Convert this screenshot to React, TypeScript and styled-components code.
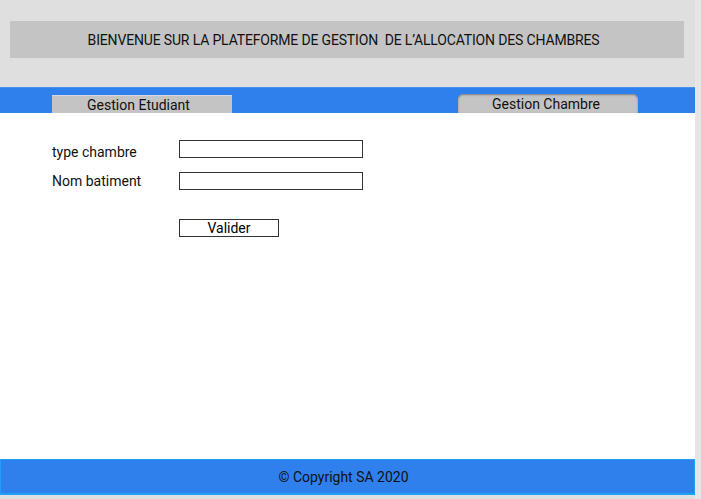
import { FC } from "react";
import styled, { createGlobalStyle } from "styled-components";

const GlobalStyle = createGlobalStyle`
  body {
    margin: 0;
    background: #dfdfdf;
    font-family: Roboto, "Liberation Sans", sans-serif;
    color: #111;
  }
`;

const Page = styled.div`
  width: 695px;
  border-right: 6px solid #e6e6e6;
  min-height: 499px;
`;

const Top = styled.div`
  padding: 21px 11px 29px 10px;
`;

const Banner = styled.div`
  height: 37px;
  background: #c4c4c4;
  display: flex;
  align-items: center;
  justify-content: center;
  padding-right: 7px;
  font-size: 14px;
  letter-spacing: -0.16px;
  white-space: pre;
`;

const Nav = styled.div`
  height: 26px;
  box-sizing: border-box;
  background: #2f80ed;
  border-top: 1px solid #4a90f0;
  display: flex;
  align-items: flex-end;
  padding-left: 52px;
`;

const Tab = styled.div<{ $rounded?: boolean; $offset?: number }>`
  width: 180px;
  height: ${(p) => (p.$rounded ? 19 : 18)}px;
  margin-left: ${(p) => p.$offset ?? 0}px;
  box-sizing: border-box;
  padding: 1px ${(p) => (p.$rounded ? 4 : 7)}px 0 0;
  background: #c4c4c4;
  font-size: 14px;
  display: flex;
  align-items: center;
  justify-content: center;
  border-radius: ${(p) => (p.$rounded ? "5px 5px 0 0" : "0")};
  box-shadow: ${(p) =>
    p.$rounded ? "inset 0 1px 2px rgba(0,0,0,0.35)" : "inset 0 1px 0 #d8d8d8"};
`;

const Content = styled.div`
  background: #fff;
  height: 346px;
  box-sizing: border-box;
  padding: 27px 0 0 52px;
`;

const Row = styled.div`
  display: flex;
  align-items: center;
  height: 18px;
  margin-bottom: 14px;
`;

const Label = styled.label<{ $shift?: number }>`
  width: 127px;
  font-size: 14px;
  position: relative;
  top: ${(p) => p.$shift ?? 0}px;
`;

const Input = styled.input`
  width: 184px;
  height: 18px;
  box-sizing: border-box;
  border: 1px solid #333;
  padding: 0;
  margin: 0;
`;

const Button = styled.button`
  margin: 29px 0 0 127px;
  width: 100px;
  height: 18px;
  box-sizing: border-box;
  border: 1px solid #333;
  background: #fff;
  font-family: Roboto, "Liberation Sans", sans-serif;
  font-size: 14px;
  padding: 0;
  line-height: 16px;
  display: block;
`;

const Footer = styled.div`
  height: 36px;
  box-sizing: border-box;
  background: #2f80ed;
  border: 1px solid #1fa0f7;
  border-width: 1px 1px 2px 1px;
  display: flex;
  align-items: center;
  justify-content: center;
  padding-right: 8px;
  font-size: 14px;
`;

const App: FC = () => {
  return (
    <>
      <GlobalStyle />
      <Page>
        <Top>
          <Banner>
            BIENVENUE SUR LA PLATEFORME DE GESTION  DE L’ALLOCATION DES CHAMBRES
          </Banner>
        </Top>
        <Nav>
          <Tab>Gestion Etudiant</Tab>
          <Tab $rounded $offset={226}>
            Gestion Chambre
          </Tab>
        </Nav>
        <Content>
          <Row>
            <Label $shift={3}>type chambre</Label>
            <Input />
          </Row>
          <Row>
            <Label>Nom batiment</Label>
            <Input />
          </Row>
          <Button>Valider</Button>
        </Content>
        <Footer>© Copyright SA 2020</Footer>
      </Page>
    </>
  );
};

export default App;
